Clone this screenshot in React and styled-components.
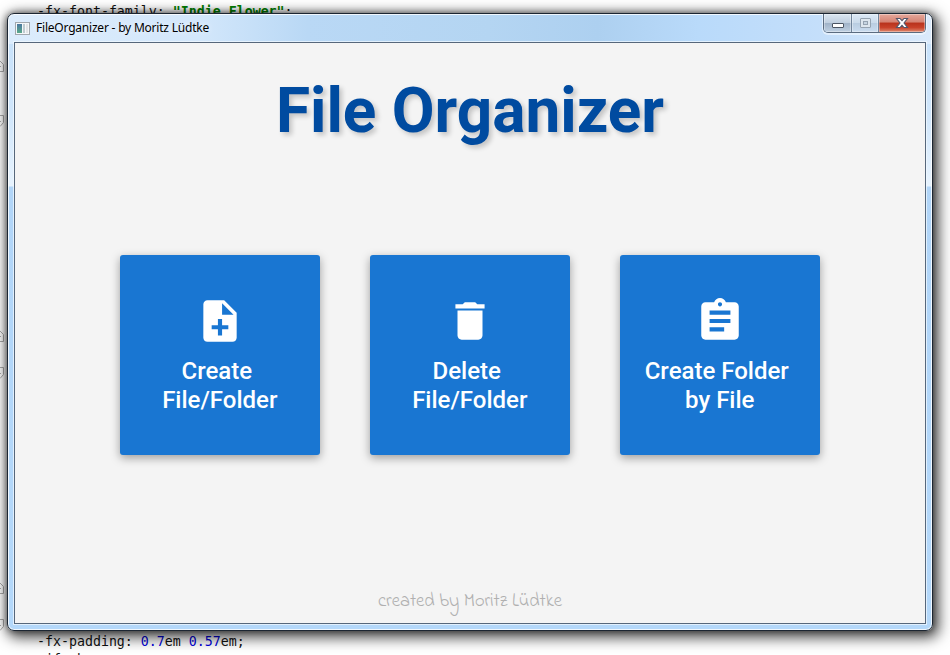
import React from "react";
import styled, { createGlobalStyle } from "styled-components";

const GlobalStyle = createGlobalStyle`
  *, *::before, *::after { box-sizing: border-box; }
  body { margin: 0; background: #fff; overflow: hidden; }
  button { font: inherit; border: 0; padding: 0; margin: 0; }
`;

const Desktop = styled.div`
  position: relative;
  width: 950px;
  height: 655px;
  overflow: hidden;
  background: #fff;
`;

const Editor = styled.div`
  display: flex;
  flex-direction: column;
  justify-content: space-between;
  height: 669px;
  padding: 3px 0 0 37px;
  font: 13.27px/18px "DejaVu Sans Mono", monospace;
  color: #111;
  white-space: pre;
`;

const CodeBlock = styled.div`
  display: flex;
  flex-direction: column;
`;

const StringToken = styled.span`
  color: #008000;
  font-weight: bold;
`;

const NumberToken = styled.span`
  color: #0000e0;
`;

const FoldMark = styled.svg`
  position: absolute;
  left: -8px;
  top: ${(p) => p.$top}px;
  width: 12px;
  height: 12px;
`;

const Window = styled.div`
  position: absolute;
  left: 7px;
  top: 13px;
  width: 926px;
  height: 618px;
  display: flex;
  flex-direction: column;
  padding: 0 6px 6px;
  border: 1px solid #1c2632;
  border-radius: 7px;
  background:
    linear-gradient(90deg, #dcecfc 0, #d3e7fb 190px, #b9d8f5 300px, #b4d5f2 480px, #add0f0 590px, #b9dafa 690px, #c5dffa 820px, #dbeafb 100%) 0 0 / 100% 30px no-repeat,
    linear-gradient(180deg, #c5e0fa 0, #d0e6fb 100px, #e7f3fe 172px, #b1d5f8 173px, #b4d8fa 100%);
  box-shadow:
    inset 0 0 0 1px rgba(255, 255, 255, 0.8),
    0 0 7px rgba(0, 0, 0, 0.5),
    3px 4px 14px 3px rgba(0, 0, 0, 0.68);
`;

const TitleBar = styled.header`
  display: flex;
  flex: 0 0 28px;
  align-items: flex-start;
  justify-content: space-between;
`;

const Caption = styled.div`
  display: flex;
  align-items: center;
  gap: 6px;
  height: 28px;
  padding-left: 1px;
  font: 12px/16px "Noto Sans", sans-serif;
  letter-spacing: -0.21px;
  color: #000;
  text-shadow: 0 0 6px rgba(255, 255, 255, 0.8);
`;

const WindowControls = styled.div`
  display: flex;
  width: 103px;
  height: 19px;
  border: 1px solid #5b6c80;
  border-top: 0;
  border-radius: 0 0 5px 5px;
  overflow: hidden;
  box-shadow: 0 1px 0 1px rgba(255, 255, 255, 0.5);
`;

const ControlButton = styled.button`
  display: flex;
  align-items: center;
  justify-content: center;
  width: ${(p) => p.$width}px;
  border-right: ${(p) => (p.$close ? "0" : "1px solid #71859b")};
  background: ${(p) =>
    p.$close
      ? "linear-gradient(#e5a99c 0, #d58272 45%, #b8321c 50%, #c8422a 75%, #df8a70 100%)"
      : p.$disabled
      ? "linear-gradient(#dce9f6 0, #cbdbeb 48%, #b9cde1 52%, #cadcef 100%)"
      : "linear-gradient(#dbe6f1 0, #c0cfdf 48%, #a0b3c8 52%, #bfd0e2 100%)"};
  box-shadow: inset 0 0 0 1px rgba(255, 255, 255, 0.35);
`;

const Content = styled.main`
  display: flex;
  flex: 1;
  flex-direction: column;
  align-items: center;
  border: 1px solid #56677b;
  background: #f4f4f4;
  box-shadow: 0 0 0 1px rgba(240, 248, 255, 0.75);
`;

const Title = styled.h1`
  margin: 31px 0 0;
  height: 73px;
  font: bold 62.1px/73px Roboto, sans-serif;
  color: #004ba0;
  text-shadow: 3px 3px 5px rgba(0, 0, 0, 0.2);
  white-space: nowrap;
`;

const Actions = styled.div`
  display: flex;
  gap: 50px;
  margin-top: 108px;
`;

const ActionCard = styled.button`
  display: flex;
  flex-direction: column;
  align-items: center;
  width: 200px;
  height: 200px;
  padding-top: 41px;
  border-radius: 3px;
  background: #1976d2;
  color: #fff;
  box-shadow: 0 3px 10px rgba(0, 0, 0, 0.36);
`;

const ActionIcon = styled.svg`
  width: 50px;
  height: 50px;
  fill: #fff;
`;

const ActionLabel = styled.span`
  margin-top: 11px;
  padding-right: 0.5px;
  font: 500 24px/29px Roboto, sans-serif;
  text-align: center;
  white-space: pre;
`;

const Credit = styled.footer`
  margin-top: auto;
  padding-bottom: 9px;
  font: 300 18.4px/24px "Indie Flower", cursive;
  color: #b0b0b0;
  white-space: nowrap;
`;

const actions = [
  {
    label: "Create \nFile/Folder",
    path: "M14 2H6c-1.1 0-1.99.9-1.99 2L4 20c0 1.1.89 2 1.99 2H18c1.1 0 2-.9 2-2V8l-6-6zm2 14h-3v3h-2v-3H8v-2h3v-3h2v3h3v2zm-3-7V3.5L18.5 9H13z",
  },
  {
    label: "Delete \nFile/Folder",
    path: "M6 19c0 1.1.9 2 2 2h8c1.1 0 2-.9 2-2V7H6v12zM19 4h-3.5l-1-1h-5l-1 1H5v2h14V4z",
  },
  {
    label: "Create Folder \nby File",
    path: "M19 3h-4.18C14.4 1.84 13.3 1 12 1c-1.3 0-2.4.84-2.82 2H5c-1.1 0-2 .9-2 2v14c0 1.1.9 2 2 2h14c1.1 0 2-.9 2-2V5c0-1.1-.9-2-2-2zm-7 0c.55 0 1 .45 1 1s-.45 1-1 1-1-.45-1-1 .45-1 1-1zm2 14H7v-2h7v2zm3-4H7v-2h10v2zm0-4H7V7h10v2z",
  },
];

const foldMarks = [
  { top: 60, open: true },
  { top: 115, open: false },
  { top: 330, open: true },
  { top: 367, open: false },
  { top: 582, open: true },
  { top: 619, open: false },
];

function AppIcon() {
  return (
    <svg width="15" height="13" viewBox="0 0 15 13">
      <defs>
        <linearGradient id="appPane" x1="0" y1="0" x2="0" y2="1">
          <stop offset="0" stopColor="#4a78a0" />
          <stop offset="1" stopColor="#5aa98a" />
        </linearGradient>
      </defs>
      <rect x=".5" y=".5" width="14" height="12" fill="#f5f7f8" stroke="#a1a8ae" />
      <rect x="2" y="2" width="5" height="9" fill="url(#appPane)" />
      <rect x="8" y="2" width="2" height="9" fill="#bfcbd0" />
      <rect x="11" y="2" width="2" height="9" fill="#e0e3e5" />
    </svg>
  );
}

export default function App() {
  return (
    <>
      <GlobalStyle />
      <Desktop>
        <Editor>
          <CodeBlock>
            <div>
              -fx-font-family: <StringToken>"Indie Flower"</StringToken>;
            </div>
          </CodeBlock>
          <CodeBlock>
            <div>
              -fx-padding: <NumberToken>0.7</NumberToken>em <NumberToken>0.57</NumberToken>em;
            </div>
            <div>-jfx-b</div>
          </CodeBlock>
        </Editor>
        {foldMarks.map((m) => (
          <FoldMark key={m.top} $top={m.top} viewBox="0 0 12 12" fill="#fff" stroke="#aaa">
            <path d={m.open ? "M.5 11.5V4.5L4 .5H7.5L11.5 4.5V11.5Z" : "M.5 .5H11.5V7.5L8 11.5H4L.5 7.5Z"} />
            <path d="M3 6.5H9" />
          </FoldMark>
        ))}
        <Window>
          <TitleBar>
            <Caption>
              <AppIcon />
              FileOrganizer - by Moritz Lüdtke
            </Caption>
            <WindowControls>
              <ControlButton $width={28} aria-label="Minimize">
                <svg width="14" height="18" viewBox="0 0 14 18">
                  <rect x="1.5" y="9.5" width="11" height="4" rx=".5" fill="#fff" stroke="#4b5563" />
                </svg>
              </ControlButton>
              <ControlButton $width={27} $disabled aria-label="Maximize">
                <svg width="13" height="18" viewBox="0 0 13 18" fill="#dde6ee" stroke="#95a3b1">
                  <rect x="1.5" y="4.5" width="10" height="9" rx=".5" />
                  <rect x="4.5" y="7.5" width="4" height="3" fill="#c6d4e1" />
                </svg>
              </ControlButton>
              <ControlButton $width={46} $close aria-label="Close">
                <svg width="14" height="18" viewBox="0 0 14 18">
                  <path
                    d="M1.5 4.5H5L7 6.7 9 4.5H12.5L9 9 12.5 13.5H9L7 11.3 5 13.5H1.5L5 9Z"
                    fill="#fff"
                    stroke="#52566a"
                    strokeWidth="1.1"
                  />
                </svg>
              </ControlButton>
            </WindowControls>
          </TitleBar>
          <Content>
            <Title>File Organizer</Title>
            <Actions>
              {actions.map((a) => (
                <ActionCard key={a.label}>
                  <ActionIcon viewBox="0 0 24 24">
                    <path d={a.path} />
                  </ActionIcon>
                  <ActionLabel>{a.label}</ActionLabel>
                </ActionCard>
              ))}
            </Actions>
            <Credit>created by Moritz Lüdtke</Credit>
          </Content>
        </Window>
      </Desktop>
    </>
  );
}
